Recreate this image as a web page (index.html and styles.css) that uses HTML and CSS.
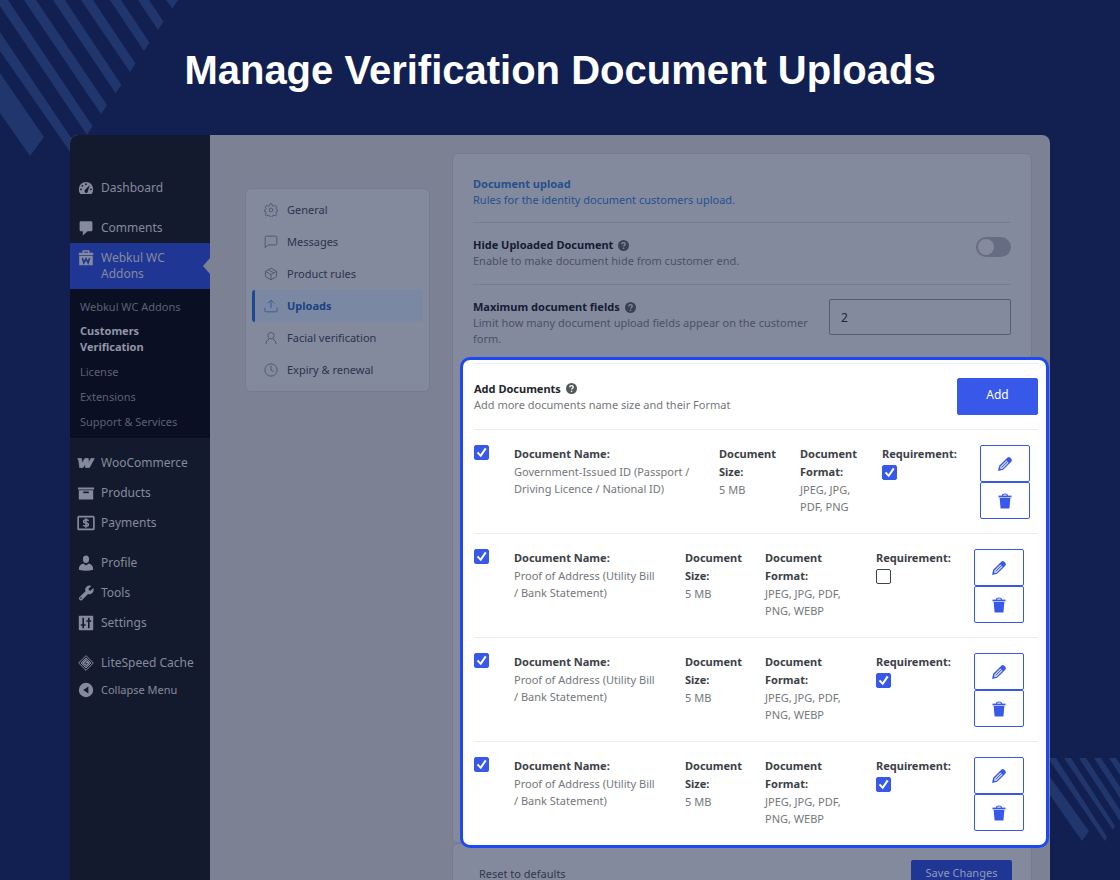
FILE: index.html
```html
<!DOCTYPE html>
<html lang="en">
<head>
    <meta charset="UTF-8">
    <meta name="viewport" content="width=device-width, initial-scale=1.0">
    <title>Manage Verification Document Uploads</title>
    <link rel="stylesheet" href="styles.css">
</head>
<body>

    <!-- Shared icons -->
    <svg class="sprite" aria-hidden="true">
        <symbol id="help" viewBox="0 0 20 20">
            <circle cx="10" cy="10" r="10" fill="currentColor"/>
            <path d="M6.800 7.600C6.800 3.600 13.200 3.800 13.200 7.400C13.200 9.600 10.200 9.600 10.200 12" fill="none" stroke="var(--mark)" stroke-width="2.400"/>
            <circle cx="10.200" cy="15" r="1.500" fill="var(--mark)"/>
        </symbol>
        <symbol id="edit" viewBox="0 0 16 16">
            <path d="M1 15l1.200-5.200L10.300 1.700q1.500-1.300 3 .1l.9.9q1.400 1.500.1 3L6.200 13.800z" fill="currentColor"/>
            <path d="M3.400 10.500l6-6 2.200 2.200-6 6-1.600.5-1-1z" fill="#c9d2fb"/>
            <path d="M4.700 11.400l5.700-5.700M9.300 3.300l3.400 3.400" stroke="currentColor" stroke-width=".9"/>
        </symbol>
        <symbol id="trash" viewBox="0 0 16 16">
            <path d="M2.600 5h10.800l-1 10.500H3.600z" fill="currentColor"/>
            <path d="M1.500 3.500h13" stroke="currentColor" stroke-width="1.800"/>
            <path d="M5.500 3q0-2 2.500-2t2.500 2" fill="none" stroke="currentColor" stroke-width="1.200"/>
        </symbol>
    </svg>

    <!-- Background stripes -->
    <svg class="stripes stripes-top" viewBox="0 0 180 160" aria-hidden="true">
        <path d="M0 73L44 137 30 156 0 113zM0 32L78 148 73 156 0 51zM-4 0H8L92.500 126 87 135zM24 0H36L107 105 101 114zM53 0H65L121.500 85 115.500 93zM81 0H93L135.500 63.500 130 72zM110 0H121L149.500 42.500 144 51zM138 0H149L163.500 21.500 158 30zM166 0H178L172.500 8.500z"/>
    </svg>
    <svg class="stripes stripes-bottom" viewBox="0 0 70 84" aria-hidden="true">
        <path d="M0 19L39 73 32 83 0 37zM0 0H6L57 79 55 83 0 3zM14 0H21L65 68 63 72zM29 0H36L70 52V63zM44 0H51L70 29V40zM59 0H66L70 6V17z"/>
    </svg>

    <h1 class="title">Manage Verification Document Uploads</h1>

    <div class="frame">
        <nav class="sidebar" aria-label="Admin menu">
            <a class="menu-item" href="#">
                <svg viewBox="0 0 20 20"><path d="M10 2.500a9 9 0 0 0-9 9q0 3.500 2 6h14q2-2.500 2-6a9 9 0 0 0-9-9z" fill="currentColor"/><g class="cut"><circle cx="10" cy="5.300" r="1.200"/><circle cx="5.500" cy="7.300" r="1.200"/><circle cx="3.800" cy="11.700" r="1.200"/><circle cx="16.200" cy="11.700" r="1.200"/><path d="M14.800 6.200l-2.800 9q-2 2-3.500.2-1.200-2 .6-3.600z"/></g></svg>
                <span>Dashboard</span>
            </a>
            <a class="menu-item spaced" href="#">
                <svg viewBox="0 0 20 20"><path d="M3.500 1.500h13q1.500 0 1.500 1.500v9.500q0 1.500-1.500 1.500H12l-6 5.500V14H3.500Q2 14 2 12.500V3q0-1.500 1.500-1.500z" fill="currentColor"/></svg>
                <span>Comments</span>
            </a>
            <a class="menu-item active" href="#">
                <svg viewBox="0 0 20 20"><path d="M1 3.500h18v3H1zM1.500 7.500h17V19h-17z" fill="currentColor"/><path d="M6.500 4V1.200h7V4" fill="none" stroke="currentColor" stroke-width="1.800"/><path class="cut-line" d="M5.500 10l1.800 6 2.700-5 2.700 5 1.800-6"/></svg>
                <span>Webkul WC Addons</span>
            </a>
            <div class="submenu">
                <a href="#">Webkul WC Addons</a>
                <a class="current" href="#">Customers Verification</a>
                <a href="#">License</a>
                <a href="#">Extensions</a>
                <a href="#">Support &amp; Services</a>
            </div>
            <a class="menu-item spaced" href="#">
                <svg class="wide" viewBox="0 0 24 20"><path d="M1 4h5l.8 6.500L10.500 4H15l.5 6.500L18.500 4H23l-6.500 12h-5l-.6-4.500L8 16H3.500L2.500 7z" fill="currentColor" stroke="currentColor" stroke-linejoin="round"/></svg>
                <span>WooCommerce</span>
            </a>
            <a class="menu-item" href="#">
                <svg viewBox="0 0 20 20"><path d="M0 3h20v2.500H0zM1 6.500h18V18H1z" fill="currentColor"/><path class="cut-line" d="M6.500 9.200h7"/></svg>
                <span>Products</span>
            </a>
            <a class="menu-item" href="#">
                <svg class="wide" viewBox="0 0 24 20"><rect x="1.500" y="1.500" width="21" height="17" rx="1" fill="none" stroke="currentColor" stroke-width="2.200"/><path d="M15.500 7Q14.500 5.800 12 5.800C7.500 5.800 8 9.800 12 9.900C16.300 10.200 16 14.200 12 14.200Q9.300 14.200 8.300 12.800M12 3.800v12.400" fill="none" stroke="currentColor" stroke-width="2"/></svg>
                <span>Payments</span>
            </a>
            <a class="menu-item spaced" href="#">
                <svg viewBox="0 0 20 20"><ellipse cx="10" cy="5.200" rx="3.800" ry="4.700" fill="currentColor"/><path d="M1 18.500q0-7 5.700-7.800L10 13l3.300-2.300q5.700.8 5.700 7.800-9 2.500-18 0z" fill="currentColor"/></svg>
                <span>Profile</span>
            </a>
            <a class="menu-item" href="#">
                <svg viewBox="0 0 20 20"><path d="M16.700 1.200l-3.600 3.500.5 2 2 .6 3.500-3.500q1.500 4.200-1.600 6.600-2.500 1.700-5 .7l-7.300 7.500q-1.500 1.400-3.300-.3-1.500-1.700 0-3.300l7.500-7.200q-1.200-2.900 1-5.200 2.700-2.700 6.300-1.400z" fill="currentColor"/><circle class="cut" cx="3.800" cy="16.400" r="1"/></svg>
                <span>Tools</span>
            </a>
            <a class="menu-item" href="#">
                <svg viewBox="0 0 20 20"><rect x="1" y="1" width="18" height="18" rx="1" fill="currentColor"/><path class="cut-line" d="M6.500 3.500v13M13.500 3.500v13M3.500 12.500h6M10.500 7.500h6"/></svg>
                <span>Settings</span>
            </a>
            <a class="menu-item spaced" href="#">
                <svg class="wide" viewBox="0 0 24 24"><path d="M12 1l11 11-11 11L1 12zM12 4.500L4.500 12l7.500 7.500 7.500-7.500z" fill="none" stroke="currentColor" stroke-width="1.500"/><path d="M12 6L18 12 12 18 6 12z" fill="currentColor"/><path class="cut-line thin" d="M13.500 8l-3.500 4.500h4L10.500 16"/></svg>
                <span>LiteSpeed Cache</span>
            </a>
            <button class="menu-item collapse" type="button">
                <svg viewBox="0 0 20 20"><circle cx="10" cy="10" r="9" fill="currentColor"/><path class="cut" d="M13 5.500v9L6.500 10z"/></svg>
                <span>Collapse Menu</span>
            </button>
        </nav>

        <main class="content">
            <nav class="tabs" aria-label="Settings sections">
                <a class="tab" href="#">
                    <svg viewBox="0 0 24 24"><circle cx="12" cy="12" r="3.200"/><path d="M10.300 1.500h3.400l.8 3 2.300 1 2.700-1.600 2.400 2.400-1.600 2.800 1 2.200 2.200.5v2.400l-2.200.7-1 2.300 1.600 2.700-2.400 2.400-2.700-1.600-2.300 1-.8 2.800h-3.400l-.8-2.800-2.300-1-2.700 1.600-2.400-2.400 1.600-2.700-1-2.300-2.200-.7v-2.400l2.200-.5 1-2.200-1.600-2.800 2.400-2.400 2.700 1.600 2.300-1z" stroke-linejoin="round"/></svg>
                    General
                </a>
                <a class="tab" href="#">
                    <svg viewBox="0 0 24 24"><path d="M22 15a2 2 0 0 1-2 2H7l-5 5V4a2 2 0 0 1 2-2h16a2 2 0 0 1 2 2z"/></svg>
                    Messages
                </a>
                <a class="tab" href="#">
                    <svg viewBox="0 0 24 24"><path d="M21.500 16.500v-9L12 2 2.500 7.500v9L12 22zM2.500 7.500L12 13l9.500-5.500M12 13v9M7.500 4.700l9 5.300"/></svg>
                    Product rules
                </a>
                <a class="tab selected" href="#">
                    <svg viewBox="0 0 24 24"><path d="M1.500 15v5a2 2 0 0 0 2 2h17a2 2 0 0 0 2-2v-5M17.500 7.500L12 2 6.500 7.500M12 2v13.500"/></svg>
                    Uploads
                </a>
                <a class="tab" href="#">
                    <svg viewBox="0 0 24 24"><circle cx="12" cy="8" r="5.500"/><path d="M3 22.500q.5-6.500 6-9M21 22.500q-.5-6.500-6-9"/></svg>
                    Facial verification
                </a>
                <a class="tab" href="#">
                    <svg viewBox="0 0 24 24"><circle cx="12" cy="12" r="10.500"/><path d="M12 5v7.500l4.500 2"/></svg>
                    Expiry &amp; renewal
                </a>
            </nav>

            <form class="settings">
                <section class="card">
                    <div class="row intro">
                        <div>
                            <h2>Document upload</h2>
                            <p>Rules for the identity document customers upload.</p>
                        </div>
                    </div>
                    <div class="row">
                        <div class="row-text">
                            <label class="name" for="hide-doc">Hide Uploaded Document <svg class="help"><use href="#help"/></svg></label>
                            <p>Enable to make document hide from customer end.</p>
                        </div>
                        <input class="toggle" type="checkbox" id="hide-doc">
                    </div>
                    <div class="row last">
                        <div class="row-text">
                            <label class="name" for="max-fields">Maximum document fields <svg class="help"><use href="#help"/></svg></label>
                            <p>Limit how many document upload fields appear on the customer form.</p>
                        </div>
                        <input class="number" type="text" inputmode="numeric" id="max-fields" value="2">
                    </div>

                    <!-- Documents list -->
                    <div class="documents">
                        <div class="doc-header">
                            <div>
                                <h3 class="name">Add Documents <svg class="help"><use href="#help"/></svg></h3>
                                <p>Add more documents name size and their Format</p>
                            </div>
                            <button class="add" type="button">Add</button>
                        </div>

                        <div class="doc doc-wide">
                            <input class="check" type="checkbox" aria-label="Use document 1" checked>
                            <div class="cell"><b>Document Name:</b><p>Government-Issued ID (Passport&nbsp;/ Driving Licence / National ID)</p></div>
                            <div class="cell"><b>Document Size:</b><p>5 MB</p></div>
                            <div class="cell"><b>Document Format:</b><p>JPEG, JPG, PDF, PNG</p></div>
                            <div class="req"><label for="req-1">Requirement:</label><input class="check" type="checkbox" id="req-1" checked></div>
                            <div class="actions">
                                <button type="button" aria-label="Edit"><svg><use href="#edit"/></svg></button>
                                <button type="button" aria-label="Delete"><svg><use href="#trash"/></svg></button>
                            </div>
                        </div>

                        <div class="doc">
                            <input class="check" type="checkbox" aria-label="Use document 2" checked>
                            <div class="cell"><b>Document Name:</b><p>Proof of Address (Utility Bill /&nbsp;Bank&nbsp;Statement)</p></div>
                            <div class="cell"><b>Document Size:</b><p>5 MB</p></div>
                            <div class="cell"><b>Document Format:</b><p>JPEG, JPG, PDF, PNG, WEBP</p></div>
                            <div class="req"><label for="req-2">Requirement:</label><input class="check" type="checkbox" id="req-2"></div>
                            <div class="actions">
                                <button type="button" aria-label="Edit"><svg><use href="#edit"/></svg></button>
                                <button type="button" aria-label="Delete"><svg><use href="#trash"/></svg></button>
                            </div>
                        </div>

                        <div class="doc">
                            <input class="check" type="checkbox" aria-label="Use document 3" checked>
                            <div class="cell"><b>Document Name:</b><p>Proof of Address (Utility Bill /&nbsp;Bank&nbsp;Statement)</p></div>
                            <div class="cell"><b>Document Size:</b><p>5 MB</p></div>
                            <div class="cell"><b>Document Format:</b><p>JPEG, JPG, PDF, PNG, WEBP</p></div>
                            <div class="req"><label for="req-3">Requirement:</label><input class="check" type="checkbox" id="req-3" checked></div>
                            <div class="actions">
                                <button type="button" aria-label="Edit"><svg><use href="#edit"/></svg></button>
                                <button type="button" aria-label="Delete"><svg><use href="#trash"/></svg></button>
                            </div>
                        </div>

                        <div class="doc">
                            <input class="check" type="checkbox" aria-label="Use document 4" checked>
                            <div class="cell"><b>Document Name:</b><p>Proof of Address (Utility Bill /&nbsp;Bank&nbsp;Statement)</p></div>
                            <div class="cell"><b>Document Size:</b><p>5 MB</p></div>
                            <div class="cell"><b>Document Format:</b><p>JPEG, JPG, PDF, PNG, WEBP</p></div>
                            <div class="req"><label for="req-4">Requirement:</label><input class="check" type="checkbox" id="req-4" checked></div>
                            <div class="actions">
                                <button type="button" aria-label="Edit"><svg><use href="#edit"/></svg></button>
                                <button type="button" aria-label="Delete"><svg><use href="#trash"/></svg></button>
                            </div>
                        </div>
                    </div>
                </section>

                <div class="card form-footer">
                    <button class="reset" type="reset">Reset to defaults</button>
                    <button class="save" type="submit">Save Changes</button>
                </div>
            </form>
        </main>
    </div>

</body>
</html>
```
FILE: styles.css
```css
* {
    box-sizing: border-box;
}

body {
    margin: 0;
    height: 100vh;
    overflow: hidden;
    display: flex;
    flex-direction: column;
    background: #112050;
    font-family: "Noto Sans", "Open Sans", sans-serif;
    font-size: 11px;
    line-height: 16px;
}

h2, h3, p {
    margin: 0;
    font-size: 11px;
}

a {
    color: inherit;
    text-decoration: none;
}

button, input {
    margin: 0;
    font: inherit;
}

.sprite {
    display: none;
}

/* Background stripes */
.stripes {
    position: absolute;
    z-index: -1;
    fill: #21366c;
}

.stripes-top {
    top: 0;
    left: 0;
    width: 180px;
}

.stripes-bottom {
    right: 0;
    bottom: 38px;
    width: 70px;
}

.title {
    margin: 0;
    padding: 45px 20px 40px;
    color: #fff;
    font: bold 40px/50px "Liberation Sans", Arial, sans-serif;
    text-align: center;
}

.frame {
    flex: 1;
    min-height: 0;
    display: flex;
    margin: 0 70px;
    background: #7c8194;
    border-radius: 8px 8px 0 0;
}

/* Admin menu */
.sidebar {
    --menu-bg: #141a2d;
    width: 140px;
    flex-shrink: 0;
    padding-top: 38px;
    background: var(--menu-bg);
    border-top-left-radius: 8px;
    color: #858a9c;
    font-size: 12px;
}

.menu-item {
    position: relative;
    display: flex;
    align-items: flex-start;
    gap: 7px;
    width: 100%;
    padding: 7px 8px;
    border: 0;
    background: none;
    color: inherit;
    text-align: left;
}

.menu-item svg {
    width: 16px;
    height: 16px;
    flex-shrink: 0;
}

.menu-item .wide {
    width: 18px;
    margin: 0 -1px;
}

.menu-item.spaced {
    margin-top: 10px;
}

.menu-item.active {
    --menu-bg: #203695;
    padding-right: 30px;
    background: #203695;
}

.menu-item.active::after {
    content: "";
    position: absolute;
    right: 0;
    top: 50%;
    margin-top: -8px;
    border: 8px solid transparent;
    border-left: 0;
    border-right: 7px solid #7c8194;
}

.menu-item.collapse {
    padding-top: 4px;
    font-size: 11px;
}

.cut {
    fill: var(--menu-bg);
}

.cut-line {
    fill: none;
    stroke: var(--menu-bg);
    stroke-width: 2;
}

.cut-line.thin {
    stroke-width: 1;
}

.submenu {
    padding: 5px 0 4px;
    background: #0a0f24;
    color: #5c6174;
    font-size: 11px;
}

.submenu a {
    display: block;
    padding: 5px 10px 4px;
}

.submenu .current {
    padding: 4px 60px 4px 10px;
    color: #9397a7;
    font-weight: bold;
}

/* Settings tabs */
.content {
    flex: 1;
    min-width: 0;
    display: flex;
    align-items: flex-start;
    gap: 22px;
    padding: 18px 18px 0 35px;
}

.tabs {
    width: 185px;
    flex-shrink: 0;
    margin-top: 35px;
    padding: 5px 6px;
    background: #848a9d;
    border: 1px solid #767b90;
    border-radius: 6px;
    color: #2b334f;
}

.tab {
    display: flex;
    align-items: center;
    gap: 9px;
    height: 32px;
    padding-left: 9px;
    border-left: 3px solid transparent;
    border-radius: 3px;
}

.tab svg {
    width: 14px;
    height: 14px;
    fill: none;
    stroke: #4e5570;
    stroke-width: 1.600;
}

.tab.selected {
    background: #7b88a3;
    border-left-color: #1d4a90;
    color: #1b417f;
    font-weight: bold;
}

.tab.selected svg {
    stroke: #355b95;
}

/* Settings form */
.settings {
    flex: 1;
    min-width: 0;
}

.card {
    background: #848a9d;
    border: 1px solid #767b90;
    border-radius: 6px;
}

.row {
    display: flex;
    justify-content: space-between;
    align-items: flex-start;
    gap: 16px;
    margin: 0 20px;
    padding: 14px 0 15px;
    border-bottom: 1px solid #787d91;
    color: #4a5068;
}

.row.intro {
    padding: 22px 0 14px;
    color: #25508d;
}

.row.last {
    padding-bottom: 10px;
    border-bottom: 0;
}

.name {
    --mark: #848a9d;
    display: flex;
    align-items: center;
    gap: 5px;
    color: #151c35;
    font-weight: bold;
}

.help {
    width: 11px;
    height: 11px;
    color: #3b4059;
}

.toggle {
    appearance: none;
    width: 35px;
    height: 20px;
    padding: 2px;
    background: #666d83;
    border-radius: 10px;
}

.toggle::before {
    content: "";
    display: block;
    width: 16px;
    height: 16px;
    background: #858a9d;
    border-radius: 50%;
}

.toggle:checked::before {
    margin-left: auto;
}

.number {
    width: 182px;
    height: 36px;
    flex-shrink: 0;
    padding: 0 11px;
    background: none;
    border: 1px solid #565c73;
    border-radius: 2px;
    color: #1d2540;
    font-size: 12px;
}

/* Documents list, wider than its card */
.documents {
    position: relative;
    margin: 0 -18px -6px 7px;
    padding: 3px 8px 0 11px;
    background: #fff;
    border: 3px solid #1f49f0;
    border-radius: 10px;
    color: #74777c;
}

.documents .name {
    --mark: #fff;
    color: #22252a;
}

.documents .help {
    color: #55585c;
}

.doc-header {
    display: flex;
    justify-content: space-between;
    align-items: center;
    padding: 14px 0;
    border: 1px solid #ececee;
    border-width: 1px 0;
}

.add {
    width: 81px;
    height: 37px;
    padding: 0 0 3px;
    background: #3858e9;
    border: 1px solid #3858e9;
    border-radius: 2px;
    color: #fff;
    font-size: 12px;
}

.doc {
    display: grid;
    grid-template-columns: 40px 171fr 80fr 111fr 98fr 50px;
    align-items: start;
    padding: 15px 14px 14px 0;
    border-bottom: 1px solid #ececee;
}

.doc-wide {
    grid-template-columns: 40px 205fr 81fr 82fr 98fr 50px;
    padding-right: 8px;
}

.doc:last-child {
    border-bottom: 0;
}

.cell {
    padding-right: 20px;
    line-height: 17px;
}

.cell b, .req label {
    display: block;
    color: #3c4046;
    font-weight: bold;
    line-height: 18px;
}

.check {
    appearance: none;
    display: block;
    width: 15px;
    height: 15px;
    background: #fff;
    border: 1px solid #3f4246;
    border-radius: 2px;
}

.check:checked {
    background: #3858e9;
    border-color: #3858e9;
}

.check:checked::before {
    content: "";
    display: block;
    width: 13px;
    height: 13px;
    background: #fff;
    clip-path: polygon(13% 53%, 26% 44%, 42% 63%, 76% 14%, 89% 23%, 45% 87%);
}

.req .check {
    margin-top: 2px;
}

.actions button {
    display: flex;
    align-items: center;
    justify-content: center;
    width: 50px;
    height: 37px;
    padding: 0;
    background: #fff;
    border: 1px solid #3858e9;
    border-radius: 2px;
    color: #3858e9;
}

.actions svg {
    width: 16px;
    height: 16px;
}

.form-footer {
    display: flex;
    justify-content: space-between;
    align-items: center;
    padding: 16px 19px 16px 26px;
}

.reset {
    padding: 0;
    background: none;
    border: 0;
    color: #2f3752;
}

.save {
    width: 101px;
    height: 28px;
    padding: 0 0 3px;
    background: #203695;
    border: 0;
    border-radius: 2px;
    color: #9299b5;
}
```
